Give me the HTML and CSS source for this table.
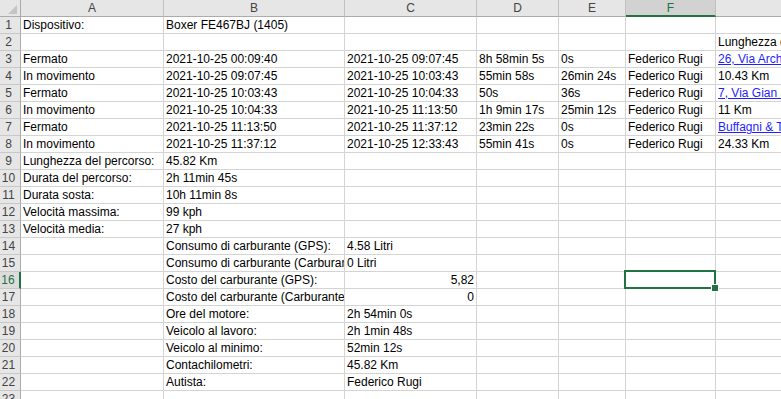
FILE: index.html
```html
<!DOCTYPE html>
<html lang="it">
<head>
<meta charset="utf-8">
<title>Foglio</title>
<link rel="stylesheet" href="styles.css">
</head>
<body>
<div class="sheet">
  <div class="grid">
    <div class="corner"><svg width="20" height="16" viewBox="0 0 20 16"><polygon points="17,5 17,14 8,14" fill="#c4c4c4"/></svg></div>
    <div class="h">A</div><div class="h">B</div><div class="h">C</div><div class="h">D</div><div class="h">E</div><div class="h hs">F</div><div class="h"></div>

    <div class="r">1</div><div class="c">Dispositivo:</div><div class="c">Boxer FE467BJ (1405)</div><div class="c"></div><div class="c"></div><div class="c"></div><div class="c"></div><div class="c"></div>
    <div class="r">2</div><div class="c"></div><div class="c"></div><div class="c"></div><div class="c"></div><div class="c"></div><div class="c"></div><div class="c">Lunghezza del percorso</div>
    <div class="r">3</div><div class="c">Fermato</div><div class="c">2021-10-25 00:09:40</div><div class="c">2021-10-25 09:07:45</div><div class="c">8h 58min 5s</div><div class="c">0s</div><div class="c">Federico Rugi</div><div class="c"><span class="link">26, Via Archimede</span></div>
    <div class="r">4</div><div class="c">In movimento</div><div class="c">2021-10-25 09:07:45</div><div class="c">2021-10-25 10:03:43</div><div class="c">55min 58s</div><div class="c">26min 24s</div><div class="c">Federico Rugi</div><div class="c">10.43 Km</div>
    <div class="r">5</div><div class="c">Fermato</div><div class="c">2021-10-25 10:03:43</div><div class="c">2021-10-25 10:04:33</div><div class="c">50s</div><div class="c">36s</div><div class="c">Federico Rugi</div><div class="c"><span class="link">7, Via Gian Battista</span></div>
    <div class="r">6</div><div class="c">In movimento</div><div class="c">2021-10-25 10:04:33</div><div class="c">2021-10-25 11:13:50</div><div class="c">1h 9min 17s</div><div class="c">25min 12s</div><div class="c">Federico Rugi</div><div class="c">11 Km</div>
    <div class="r">7</div><div class="c">Fermato</div><div class="c">2021-10-25 11:13:50</div><div class="c">2021-10-25 11:37:12</div><div class="c">23min 22s</div><div class="c">0s</div><div class="c">Federico Rugi</div><div class="c"><span class="link">Buffagni &amp; Tavernari</span></div>
    <div class="r">8</div><div class="c">In movimento</div><div class="c">2021-10-25 11:37:12</div><div class="c">2021-10-25 12:33:43</div><div class="c">55min 41s</div><div class="c">0s</div><div class="c">Federico Rugi</div><div class="c">24.33 Km</div>
    <div class="r">9</div><div class="c">Lunghezza del percorso:</div><div class="c">45.82 Km</div><div class="c"></div><div class="c"></div><div class="c"></div><div class="c"></div><div class="c"></div>
    <div class="r">10</div><div class="c">Durata del percorso:</div><div class="c">2h 11min 45s</div><div class="c"></div><div class="c"></div><div class="c"></div><div class="c"></div><div class="c"></div>
    <div class="r">11</div><div class="c">Durata sosta:</div><div class="c">10h 11min 8s</div><div class="c"></div><div class="c"></div><div class="c"></div><div class="c"></div><div class="c"></div>
    <div class="r">12</div><div class="c">Velocità massima:</div><div class="c">99 kph</div><div class="c"></div><div class="c"></div><div class="c"></div><div class="c"></div><div class="c"></div>
    <div class="r">13</div><div class="c">Velocità media:</div><div class="c">27 kph</div><div class="c"></div><div class="c"></div><div class="c"></div><div class="c"></div><div class="c"></div>
    <div class="r">14</div><div class="c"></div><div class="c">Consumo di carburante (GPS):</div><div class="c">4.58 Litri</div><div class="c"></div><div class="c"></div><div class="c"></div><div class="c"></div>
    <div class="r">15</div><div class="c"></div><div class="c">Consumo di carburante (Carburante):</div><div class="c">0 Litri</div><div class="c"></div><div class="c"></div><div class="c"></div><div class="c"></div>
    <div class="r rs">16</div><div class="c"></div><div class="c">Costo del carburante (GPS):</div><div class="c num">5,82</div><div class="c"></div><div class="c"></div><div class="c"></div><div class="c"></div>
    <div class="r">17</div><div class="c"></div><div class="c">Costo del carburante (Carburante):</div><div class="c num">0</div><div class="c"></div><div class="c"></div><div class="c"></div><div class="c"></div>
    <div class="r">18</div><div class="c"></div><div class="c">Ore del motore:</div><div class="c">2h 54min 0s</div><div class="c"></div><div class="c"></div><div class="c"></div><div class="c"></div>
    <div class="r">19</div><div class="c"></div><div class="c">Veicolo al lavoro:</div><div class="c">2h 1min 48s</div><div class="c"></div><div class="c"></div><div class="c"></div><div class="c"></div>
    <div class="r">20</div><div class="c"></div><div class="c">Veicolo al minimo:</div><div class="c">52min 12s</div><div class="c"></div><div class="c"></div><div class="c"></div><div class="c"></div>
    <div class="r">21</div><div class="c"></div><div class="c">Contachilometri:</div><div class="c">45.82 Km</div><div class="c"></div><div class="c"></div><div class="c"></div><div class="c"></div>
    <div class="r">22</div><div class="c"></div><div class="c">Autista:</div><div class="c">Federico Rugi</div><div class="c"></div><div class="c"></div><div class="c"></div><div class="c"></div>
    <div class="r">23</div><div class="c"></div><div class="c"></div><div class="c"></div><div class="c"></div><div class="c"></div><div class="c"></div><div class="c"></div>
  </div>
  <div class="selbox"></div>
  <div class="handle"></div>
</div>
</body>
</html>
```
FILE: styles.css
```css
html, body {
  margin: 0;
  padding: 0;
  background: #ffffff;
  overflow: hidden;
}
.sheet {
  position: relative;
  width: 781px;
  height: 399px;
  overflow: hidden;
  font-family: "Liberation Sans", Arial, sans-serif;
  font-size: 12px;
  color: #000;
}
.grid {
  display: grid;
  grid-template-columns: 21px 143px 181px 132px 82px 67px 90px 140px;
  grid-auto-rows: 17px;
  width: 876px;
}
.grid > div {
  box-sizing: border-box;
  white-space: nowrap;
  overflow: hidden;
  line-height: 16px;
}
.corner {
  background: #e6e6e6;
  border-right: 1px solid #ababab;
  border-bottom: 1px solid #ababab;
}
.corner svg { display: block; }
.h {
  background: #e6e6e6;
  border-right: 1px solid #c0c0c0;
  border-bottom: 1px solid #ababab;
  text-align: center;
  color: #444;
  line-height: 17px !important;
}
.h.hs {
  background: #d2d2d2;
  border-bottom: 2px solid #217346;
  color: #217346;
}
.r {
  background: #e6e6e6;
  border-right: 1px solid #ababab;
  border-bottom: 1px solid #c8c8c8;
  color: #444;
  text-align: center;
  padding-right: 3px;
}
.r.rs {
  background: #dcdcdc;
  border-right: 2px solid #217346;
  color: #217346;
}
.c {
  border-right: 1px solid #d4d4d4;
  border-bottom: 1px solid #d4d4d4;
  padding: 0 2px;
}
.num { text-align: right; }
.link {
  color: #1f1fff;
  text-decoration: underline;
}
.selbox {
  position: absolute;
  left: 624px;
  top: 270px;
  width: 92px;
  height: 19px;
  box-sizing: border-box;
  border: 2px solid #217346;
}
.handle {
  position: absolute;
  left: 711px;
  top: 284px;
  width: 6px;
  height: 6px;
  background: #217346;
  border: 1px solid #ffffff;
}
```
